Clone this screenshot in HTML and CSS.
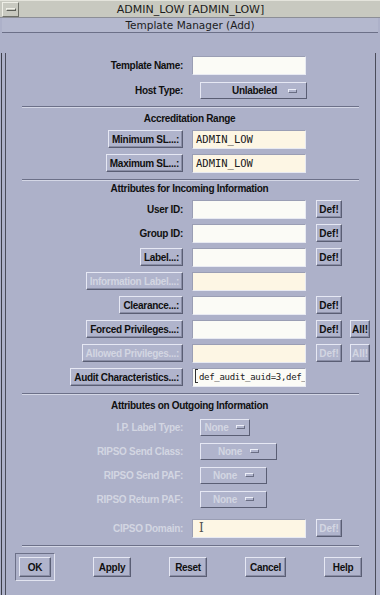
FILE: index.html
```html
<!DOCTYPE html>
<html lang="en">
<head>
  <meta charset="UTF-8">
  <title>Template Manager (Add)</title>
  <link rel="stylesheet" href="styles.css">
</head>
<body>

  <div class="window">
    <div class="titlebar">
      <div class="menu-btn"><span></span></div>
      <div class="title">ADMIN_LOW [ADMIN_LOW]</div>
    </div>
    <div class="subtitle">Template Manager (Add)</div>

    <div class="frame">
      <div class="content">

        <div class="row first">
          <div class="label">Template Name:</div>
          <div class="field"><div class="input white"></div></div>
        </div>
        <div class="row gap1">
          <div class="label">Host Type:</div>
          <div class="field"><div class="option wide">Unlabeled<i></i></div></div>
        </div>

        <div class="sep"></div>
        <div class="heading">Accreditation Range</div>

        <div class="row gap2">
          <div class="label"><span class="btn">Minimum SL...:</span></div>
          <div class="field"><div class="input cream mono">ADMIN_LOW</div></div>
        </div>
        <div class="row">
          <div class="label"><span class="btn">Maximum SL...:</span></div>
          <div class="field"><div class="input cream mono">ADMIN_LOW</div></div>
        </div>

        <div class="sep"></div>
        <div class="heading tight">Attributes for Incoming Information</div>

        <div class="row gap2">
          <div class="label">User ID:</div>
          <div class="field"><div class="input white"></div></div>
          <span class="btn small">Def!</span>
        </div>
        <div class="row">
          <div class="label">Group ID:</div>
          <div class="field"><div class="input white"></div></div>
          <span class="btn small">Def!</span>
        </div>
        <div class="row">
          <div class="label"><span class="btn">Label...:</span></div>
          <div class="field"><div class="input white"></div></div>
          <span class="btn small">Def!</span>
        </div>
        <div class="row">
          <div class="label"><span class="btn off">Information Label...:</span></div>
          <div class="field"><div class="input cream"></div></div>
        </div>
        <div class="row">
          <div class="label"><span class="btn">Clearance...:</span></div>
          <div class="field"><div class="input white"></div></div>
          <span class="btn small">Def!</span>
        </div>
        <div class="row">
          <div class="label"><span class="btn">Forced Privileges...:</span></div>
          <div class="field"><div class="input white"></div></div>
          <span class="btn small">Def!</span>
          <span class="btn tiny">All!</span>
        </div>
        <div class="row">
          <div class="label"><span class="btn off">Allowed Privileges...:</span></div>
          <div class="field"><div class="input cream"></div></div>
          <span class="btn small off">Def!</span>
          <span class="btn tiny off">All!</span>
        </div>
        <div class="row">
          <div class="label"><span class="btn">Audit Characteristics...:</span></div>
          <div class="field"><div class="input white mono narrow"><b class="caret"></b>def_audit_auid=3,def_</div></div>
        </div>

        <div class="sep"></div>
        <div class="heading">Attributes on Outgoing Information</div>

        <div class="row gap3">
          <div class="label off-text">I.P. Label Type:</div>
          <div class="field"><div class="option off" style="width: 50px">None<i></i></div></div>
        </div>
        <div class="row">
          <div class="label off-text">RIPSO Send Class:</div>
          <div class="field"><div class="option off" style="width: 77px">None<i></i></div></div>
        </div>
        <div class="row">
          <div class="label off-text">RIPSO Send PAF:</div>
          <div class="field"><div class="option off" style="width: 67px">None<i></i></div></div>
        </div>
        <div class="row">
          <div class="label off-text">RIPSO Return PAF:</div>
          <div class="field"><div class="option off" style="width: 67px">None<i></i></div></div>
        </div>
        <div class="row gap5">
          <div class="label off-text">CIPSO Domain:</div>
          <div class="field"><div class="input cream mono"><span class="ibeam">I</span></div></div>
          <span class="btn small off">Def!</span>
        </div>

        <div class="sep gap5"></div>

        <div class="actions">
          <div class="default"><span class="btn action">OK</span></div>
          <span class="btn action">Apply</span>
          <span class="btn action">Reset</span>
          <span class="btn action">Cancel</span>
          <span class="btn action">Help</span>
        </div>

      </div>
    </div>
  </div>

</body>
</html>
```

FILE: styles.css
```css
body {
  margin: 0;
  background: #2a2a2a;
  font-family: "Liberation Sans", Arial, sans-serif;
}

.window {
  width: 380px;
  height: 595px;
  background: #adb1c9;
  overflow: hidden;
}

/* Title bars */
.titlebar {
  height: 18px;
  display: flex;
  align-items: center;
  background: #c8c9c0;
  border-top: 1px solid #e4e4dc;
  box-sizing: border-box;
  border-bottom: 1px solid #8c8e96;
  padding-left: 2px;
}

.menu-btn {
  width: 17px;
  height: 15px;
  box-sizing: border-box;
  border: 1px solid;
  border-color: #eeeee6 #6e7068 #6e7068 #eeeee6;
  display: flex;
  align-items: center;
  justify-content: center;
}

.menu-btn span {
  width: 10px;
  height: 3px;
  background: #c8c9c0;
  border: 1px solid;
  border-color: #f0f0e8 #5c5e58 #5c5e58 #f0f0e8;
  box-sizing: border-box;
}

.title {
  flex: 1;
  text-align: center;
  font-family: "DejaVu Sans", sans-serif;
  font-size: 11px;
  color: #1c1c1c;
  padding-right: 18px;
}

.subtitle {
  height: 15px;
  line-height: 14px;
  text-align: center;
  font-family: "DejaVu Sans", sans-serif;
  font-size: 10.5px;
  color: #1c1c1c;
  background: #b4b8ce;
  border-bottom: 1px solid #6c7088;
  box-sizing: border-box;
  margin: 0 2px;
}

/* Window frame */
.frame {
  height: 562px;
  border-left: 5px solid #adb1c9;
  border-right: 4px solid #adb1c9;
  border-bottom: 4px solid #adb1c9;
  box-shadow: inset 1px 0 0 #4a4c5a, inset -1px 0 0 #4a4c5a, inset 0 -1px 0 #4a4c5a;
  position: relative;
}

.frame::before {
  content: "";
  position: absolute;
  left: -4px;
  top: 0;
  bottom: -3px;
  width: 1px;
  background: #3c3e48;
}

.content {
  padding: 0 4px 0 2px;
  height: 100%;
  box-sizing: border-box;
}

/* Form rows */
.row {
  height: 24px;
  display: flex;
  align-items: center;
  font-size: 10px;
  letter-spacing: -0.3px;
  font-weight: bold;
  color: #101010;
}

.row.first { margin-top: 20px; }
.row.gap1 { margin-top: 1px; }
.row.gap2 { margin-top: 2px; }
.row.gap3 { margin-top: 3px; }
.row.gap5 { margin-top: 5px; }

.label {
  width: 176px;
  text-align: right;
  flex-shrink: 0;
}

.off-text {
  color: #d3d6e2;
  font-weight: bold;
}

.field {
  width: 114px;
  margin-left: 9px;
  margin-right: 10px;
  flex-shrink: 0;
}

.input {
  height: 19px;
  box-sizing: border-box;
  border: 1px solid;
  border-color: #9a9eb4 #e8eaf2 #e8eaf2 #9a9eb4;
  padding-left: 3px;
  line-height: 17px;
  white-space: nowrap;
  overflow: hidden;
}

.input.white { background: #fbfbf6; }
.input.cream { background: #fdf6e4; }

.mono {
  font-family: "DejaVu Sans Mono", "Liberation Mono", monospace;
  font-weight: normal;
  font-size: 10.5px;
  letter-spacing: 0;
  color: #202020;
}

.mono.narrow {
  font-size: 9px;
  letter-spacing: -0.3px;
  padding-left: 2px;
}

.caret {
  display: inline-block;
  width: 2px;
  height: 12px;
  border: 1px solid #303030;
  border-right: none;
  vertical-align: -3px;
  margin-right: 1px;
}

.ibeam {
  font-family: "DejaVu Serif", serif;
  color: #505050;
  font-size: 12px;
  padding-left: 3px;
}

/* Raised buttons */
.btn {
  display: inline-block;
  height: 18px;
  line-height: 17px;
  box-sizing: border-box;
  padding: 0 3px;
  background: #b0b4cc;
  border: 1px solid;
  border-color: #e6e8f4 #5a5e74 #5a5e74 #e6e8f4;
  box-shadow: inset -1px -1px 0 #8a8ea6;
  font-size: 10px;
  letter-spacing: -0.3px;
  font-weight: bold;
  color: #101010;
  text-align: center;
}

.btn.off,
.option.off {
  color: #d3d6e2;
}

.btn.small {
  width: 26px;
  padding: 0;
  letter-spacing: 0;
}

.btn.tiny {
  width: 20px;
  padding: 0;
  margin-left: 8px;
  letter-spacing: 0;
}

/* Option menus */
.option {
  margin-left: 8px;
  height: 17px;
  box-sizing: border-box;
  background: #b0b4cc;
  border: 1px solid;
  border-color: #e6e8f4 #5a5e74 #5a5e74 #e6e8f4;
  display: flex;
  align-items: center;
  justify-content: center;
  gap: 8px;
  position: relative;
  font-size: 10px;
  font-weight: bold;
}

.option.wide {
  width: 107px;
  justify-content: flex-start;
  padding-left: 31px;
  gap: 0;
}

.option i {
  width: 9px;
  height: 4px;
  border: 1px solid;
  border-color: #eceef8 #6a6e84 #6a6e84 #eceef8;
  box-sizing: border-box;
}

.option.wide i {
  position: absolute;
  right: 9px;
  top: 6px;
}

/* Separators and headings */
.sep {
  margin: 4px 13px 0 15px;
  height: 2px;
  border-top: 1px solid #6c7088;
  border-bottom: 1px solid #d4d7e6;
  box-sizing: border-box;
}

.heading {
  margin-top: 3px;
  height: 14px;
  line-height: 15px;
  text-align: center;
  font-size: 10px;
  letter-spacing: -0.3px;
  font-weight: bold;
  color: #101010;
}

.heading.tight { margin-top: 0; }

.sep.gap5 { margin-top: 5px; }

/* Bottom action buttons */
.actions {
  margin-top: 6px;
  height: 28px;
  display: flex;
  align-items: center;
  padding: 0 10px 0 8px;
  justify-content: space-between;
}

.btn.action {
  height: 20px;
  line-height: 19px;
  min-width: 38px;
  padding: 0 4px;
}

.default {
  padding: 3px;
  border: 1px solid;
  border-color: #6c7088 #e2e4f0 #e2e4f0 #6c7088;
}

.default .btn.action {
  width: 32px;
  min-width: 0;
}
```
